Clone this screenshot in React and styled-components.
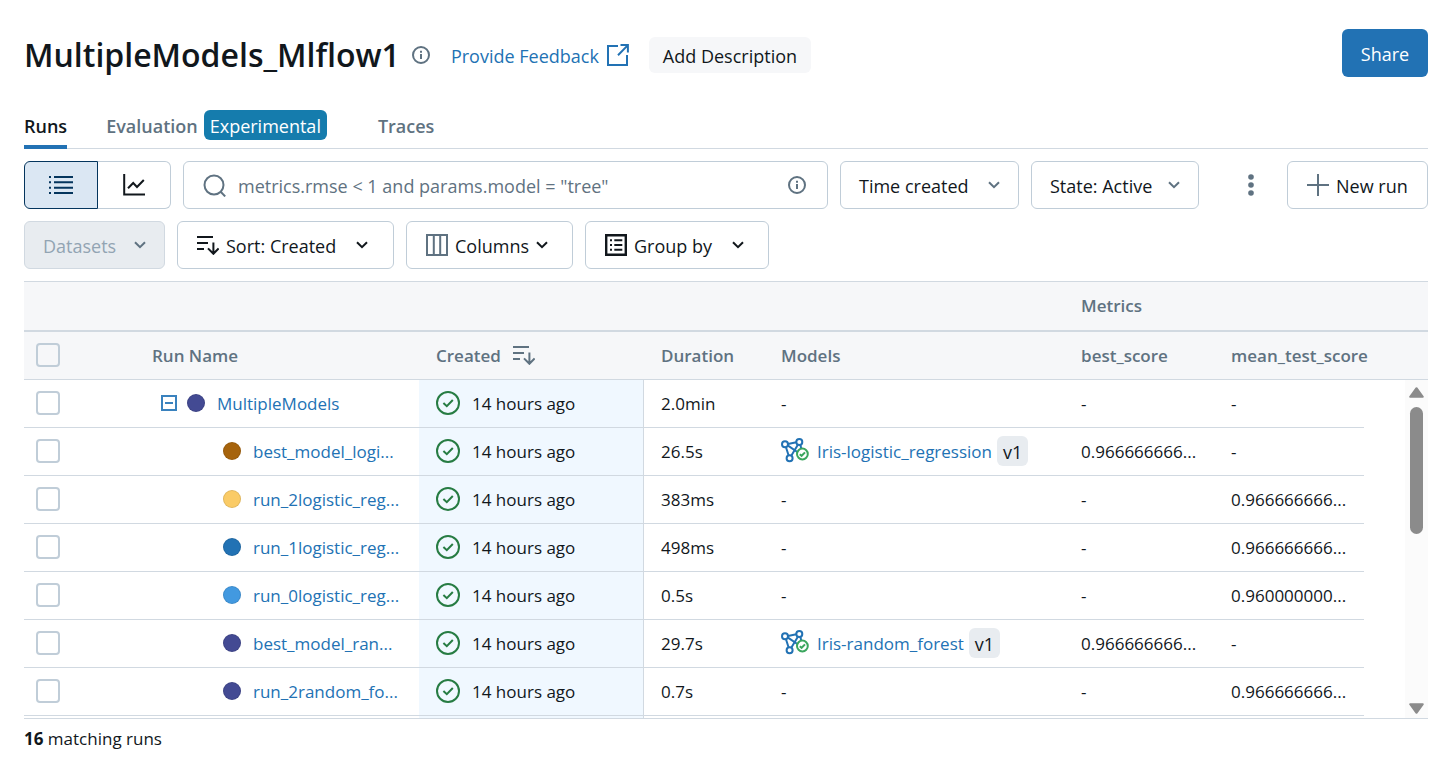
import React from "react";
import styled, { createGlobalStyle, css } from "styled-components";

const color = {
  text: "#11171c",
  muted: "#5f7281",
  link: "#2272b4",
  border: "#c0cdd8",
  line: "#d1d9e1",
  header: "#f6f7f9",
  disabled: "#e8ecf0",
};

const GlobalStyle = createGlobalStyle`
  * { box-sizing: border-box; }
  body {
    margin: 0;
    background: #fff;
    color: ${color.text};
    font-family: "Open Sans", "Noto Sans", sans-serif;
    font-size: 18px;
    line-height: 24px;
  }
  button, input { font: inherit; color: inherit; }
  svg { display: block; flex: none; }
`;

const Page = styled.main`
  padding: 29px 22px 20px 24px;
`;

const Header = styled.header`
  display: flex;
  align-items: center;
  height: 48px;
`;

const Title = styled.h1`
  margin: 0 12px 0 0;
  padding-top: 4px;
  font-size: 32px;
  line-height: 44px;
  font-weight: 600;
`;

const Link = styled.a`
  display: inline-flex;
  align-items: center;
  gap: 8px;
  color: ${color.link};
  text-decoration: none;
  white-space: nowrap;
`;

const FeedbackLink = styled(Link)`
  margin: 4px 20px 0 21px;
  height: 36px;
`;

const InfoSlot = styled.span`
  display: inline-flex;
  padding-top: 4px;
`;

const TonalButton = styled.button`
  height: 36px;
  margin-top: 4px;
  padding: 2px 14px 0;
  border: 0;
  border-radius: 6px;
  background: ${color.header};
`;

const ShareButton = styled.button`
  width: 86px;
  height: 48px;
  margin-left: auto;
  padding: 2px 0 0;
  border: 0;
  border-radius: 6px;
  background: ${color.link};
  color: #fff;
`;

const Tabs = styled.nav`
  display: flex;
  gap: 39px;
  height: 48px;
  margin-top: 24px;
  border-bottom: 1px solid ${color.line};
`;

const Tab = styled.a`
  display: flex;
  align-items: center;
  gap: 6px;
  height: 48px;
  padding-top: 4px;
  color: ${(p) => (p.$active ? color.text : color.muted)};
  border-bottom: 4px solid ${(p) => (p.$active ? color.link : "transparent")};
  font-weight: 600;
  text-decoration: none;
`;

const TabLabel = styled.span`
  padding-top: 2px;
`;

const Badge = styled.span`
  height: 30px;
  padding: 0 6px;
  margin-right: 12px;
  border-radius: 6px;
  background: #157cad;
  color: #fff;
  font-weight: 400;
  line-height: 32px;
`;

const Toolbar = styled.div`
  display: flex;
  gap: 12px;
  margin-top: 12px;
`;

const Segments = styled.div`
  display: flex;
`;

const segmentActive = css`
  width: 74px;
  border-color: #04355d;
  border-left-width: 1px;
  border-radius: 6px 0 0 6px;
  background: #dbe7f3;
  color: #04355d;
`;

const Segment = styled.button`
  display: flex;
  align-items: center;
  justify-content: center;
  width: 73px;
  height: 48px;
  padding: 0;
  border: 1px solid ${color.border};
  border-left-width: 0;
  border-radius: 0 6px 6px 0;
  background: #fff;
  ${(p) => p.$active && segmentActive}
`;

const SearchBox = styled.label`
  display: flex;
  flex: 1;
  align-items: center;
  gap: 12px;
  height: 48px;
  padding: 0 21px 0 19px;
  border: 1px solid ${color.border};
  border-radius: 6px;
  color: ${color.muted};
`;

const SearchInput = styled.input`
  flex: 1;
  min-width: 0;
  padding: 2px 0 0;
  border: 0;
  outline: 0;
  background: transparent;
  &::placeholder { color: ${color.muted}; opacity: 1; }
`;

const ToolButton = styled.button`
  display: flex;
  align-items: center;
  gap: ${(p) => p.$gap || 7}px;
  width: ${(p) => p.$width}px;
  height: 48px;
  padding: 0 ${(p) => (p.$icon ? 19 : 18)}px;
  border: 1px solid ${color.border};
  border-radius: 6px;
  background: #fff;
  white-space: nowrap;
  span { padding-top: 2px; }
  &:disabled {
    border-color: ${color.line};
    background: ${color.disabled};
    color: #92a4b3;
  }
`;

const Spaced = styled.i`
  margin-left: 13px;
`;

const MenuButton = styled.button`
  display: flex;
  align-items: center;
  justify-content: center;
  width: 48px;
  height: 48px;
  margin-left: 16px;
  padding: 0;
  border: 0;
  background: transparent;
`;

const GridFrame = styled.section`
  position: relative;
  margin-top: 12px;
  border-top: 1px solid ${color.line};
  border-bottom: 1px solid ${color.line};
`;

const Table = styled.table`
  width: 100%;
  table-layout: fixed;
  border-collapse: separate;
  border-spacing: 0;
`;

const Col = styled.col`
  width: ${(p) => (p.$width ? `${p.$width}px` : "auto")};
`;

const Th = styled.th`
  height: ${(p) => (p.$group ? 50 : 48)}px;
  padding: 0 0 0 ${(p) => (p.$pad ?? 17)}px;
  border-bottom: ${(p) => (p.$group ? 2 : 1)}px solid ${color.line};
  background: ${color.header};
  color: ${color.muted};
  font-size: 17px;
  font-weight: 600;
  text-align: left;
  white-space: nowrap;
`;

const Td = styled.td`
  height: 48px;
  padding: 0 0 0 ${(p) => (p.$pad ?? 17)}px;
  border-bottom: 1px solid ${color.line};
  font-size: 17px;
  white-space: nowrap;
  overflow: hidden;
  ${(p) => p.$sorted && css`
    border-right: 1px solid ${color.line};
    background: #f0f8ff;
  `}
  ${(p) => p.$bare && "border-bottom: 0;"}
  ${(p) => p.$peek && "height: 2px; border-bottom: 0;"}
`;

const Cell = styled.div`
  display: flex;
  align-items: center;
  gap: ${(p) => p.$gap || 0}px;
  padding: 0 0 2px ${(p) => p.$indent || 0}px;
`;

const CellText = styled.span`
  padding-top: 2px;
`;

const Checkbox = styled.input`
  display: block;
  appearance: none;
  width: 24px;
  height: 24px;
  margin: 0;
  border: 2px solid ${color.border};
  border-radius: 4px;
  background: transparent;
`;

const Expander = styled.button`
  margin-right: 10px;
  padding: 0;
  border: 0;
  background: transparent;
  color: #3a82be;
`;

const Dot = styled.span`
  flex: none;
  width: 18px;
  height: 18px;
  margin-right: 12px;
  border: 1px solid rgba(0, 0, 0, 0.1);
  border-radius: 50%;
  background: ${(p) => p.$color};
`;

const Version = styled.span`
  height: 30px;
  padding: 2px 6px 0;
  border-radius: 6px;
  background: ${color.disabled};
  font-size: 18px;
  line-height: 28px;
`;

const Scrollbar = styled.div`
  position: absolute;
  top: 98px;
  right: 0;
  bottom: 0;
  display: flex;
  flex-direction: column;
  align-items: center;
  justify-content: space-between;
  width: 23px;
  padding: 7px 0 4px;
  background: #fbfbfb;
`;

const ScrollTop = styled.div`
  display: flex;
  flex-direction: column;
  align-items: center;
  gap: 9px;
`;

const Thumb = styled.div`
  width: 13px;
  height: 127px;
  border-radius: 7px;
  background: #8b8b8b;
`;

const Footer = styled.footer`
  margin-top: 8px;
  font-size: 17px;
`;

const Stroke = ({ w, h, sw = 2, children, ...rest }) => (
  <svg width={w} height={h} viewBox={`0 0 ${w} ${h}`} fill="none" stroke="currentColor" strokeWidth={sw} aria-hidden="true" {...rest}>
    {children}
  </svg>
);

const InfoIcon = () => (
  <Stroke w={18} h={18} color={color.muted}>
    <circle cx="9" cy="9" r="8" />
    <path d="M9 8v5M9 4.7v2" />
  </Stroke>
);

const ExternalIcon = () => (
  <Stroke w={22} h={22}>
    <path d="M11 2H1V21H20V11M11 11.2 20.4 1.6M13.5 1.1H20.9V8.5" />
  </Stroke>
);

const ListIcon = () => (
  <Stroke w={24} h={20}>
    <path d="M0 2h2M0 7.3h2M0 12.7h2M0 18h2M5 2h19M5 7.3h19M5 12.7h19M5 18h19" />
  </Stroke>
);

const ChartIcon = () => (
  <Stroke w={22} h={22}>
    <path d="M1.2 0V20.5H22M5 14.2 10.2 9 14 13 20.8 6" />
  </Stroke>
);

const SearchIcon = () => (
  <Stroke w={23} h={23} color={color.muted}>
    <circle cx="11" cy="11" r="9.5" />
    <path d="M17.4 17.5 22.2 22.4" />
  </Stroke>
);

const Chevron = ({ muted }) => (
  <Stroke w={12} h={8} color={muted ? color.muted : color.text}>
    <path d="M1 1.2 6 6.2 11 1.2" />
  </Stroke>
);

const PlusIcon = () => (
  <Stroke w={22} h={22} color={color.muted}>
    <path d="M11 0v22M0 11h22" />
  </Stroke>
);

const DotsIcon = () => (
  <svg width="6" height="22" viewBox="0 0 6 22" fill={color.muted} aria-hidden="true">
    <circle cx="3" cy="3" r="2.8" />
    <circle cx="3" cy="11" r="2.8" />
    <circle cx="3" cy="19" r="2.8" />
  </svg>
);

const SortIcon = () => (
  <Stroke w={22} h={20}>
    <path d="M0 2h16M0 8h11M0 14h7M16.4 7.5V18.6M11 13.4 16.4 18.8 21.6 13.4" />
  </Stroke>
);

const ColumnsIcon = () => (
  <Stroke w={22} h={22} color={color.muted}>
    <path d="M1 1H21V21H1ZM7.8 1V21M14.2 1V21" />
  </Stroke>
);

const GroupIcon = () => (
  <Stroke w={22} h={22}>
    <path strokeWidth="2.4" d="M1.2 1.2H20.8V20.8H1.2Z" />
    <path d="M5 6.3h2M5 11h2M5 15.7h2M9.3 6.3h8M9.3 11h8M9.3 15.7h8" />
  </Stroke>
);

const MinusBox = () => (
  <Stroke w={16} h={16}>
    <path d="M1 1H15V15H1ZM4 8h8" />
  </Stroke>
);

const SuccessIcon = () => (
  <Stroke w={24} h={24} color="#277c43">
    <circle cx="12" cy="12" r="11" />
    <path d="M7.4 12 10.8 15.2 16.8 9" />
  </Stroke>
);

const ModelIcon = () => (
  <Stroke w={28} h={26} color={color.link}>
    <path d="M7 6 15.4 4.3M4.9 9 7.7 17.8M7 7.7 20 16.5M17.2 6.3 10.4 17.6M19.3 6.5 20.6 12" />
    <circle cx="4" cy="6.3" r="3" />
    <circle cx="18.3" cy="4" r="3" />
    <circle cx="8.6" cy="20.2" r="3" />
    <circle cx="21.4" cy="16" r="5.4" fill="#fff" stroke="#3ba65e" />
    <path d="M18.8 16.2 20.6 17.8 24 14.4" stroke="#3ba65e" />
  </Stroke>
);

const Arrow = ({ down }) => (
  <svg width="15" height="11" viewBox="0 0 15 11" fill="#8b8b8b" stroke="#8b8b8b" strokeWidth="2" strokeLinejoin="round" aria-hidden="true">
    <path d={down ? "M1.2 1.2H13.8L7.5 9.8Z" : "M1.2 9.8H13.8L7.5 1.2Z"} />
  </svg>
);

const runs = [
  { name: "MultipleModels", dot: "#434a93", parent: true, duration: "2.0min" },
  { name: "best_model_logi...", dot: "#a6630c", duration: "26.5s", model: "Iris-logistic_regression", best: "0.966666666..." },
  { name: "run_2logistic_reg...", dot: "#facb66", duration: "383ms", mean: "0.966666666..." },
  { name: "run_1logistic_reg...", dot: "#2272b4", duration: "498ms", mean: "0.966666666..." },
  { name: "run_0logistic_reg...", dot: "#4299e0", duration: "0.5s", mean: "0.960000000..." },
  { name: "best_model_ran...", dot: "#434a93", duration: "29.7s", model: "Iris-random_forest", best: "0.966666666..." },
  { name: "run_2random_fo...", dot: "#434a93", duration: "0.7s", mean: "0.966666666..." },
];

const RunRow = ({ run }) => (
  <tr>
    <Td $pad={12}>
      <Cell><Checkbox type="checkbox" aria-label={`Select ${run.name}`} /></Cell>
    </Td>
    <Td $pad={21}>
      <Cell $indent={run.parent ? 0 : 62}>
        {run.parent && <Expander aria-label="Collapse"><MinusBox /></Expander>}
        <Dot $color={run.dot} />
        <Link href="#run"><CellText>{run.name}</CellText></Link>
      </Cell>
    </Td>
    <Td $sorted><Cell $gap={12}><SuccessIcon /><CellText>14 hours ago</CellText></Cell></Td>
    <Td>{run.duration}</Td>
    <Td>
      {run.model ? (
        <Cell $gap={5}>
          <Link href="#model"><ModelIcon /><CellText>{run.model}</CellText></Link>
          <Version>v1</Version>
        </Cell>
      ) : "-"}
    </Td>
    <Td>{run.best || "-"}</Td>
    <Td>{run.mean || "-"}</Td>
    <Td $bare />
  </tr>
);

export default function App() {
  return (
    <>
      <GlobalStyle />
      <Page>
        <Header>
          <Title>MultipleModels_Mlflow1</Title>
          <InfoSlot><InfoIcon /></InfoSlot>
          <FeedbackLink href="#feedback"><CellText>Provide Feedback</CellText><ExternalIcon /></FeedbackLink>
          <TonalButton>Add Description</TonalButton>
          <ShareButton>Share</ShareButton>
        </Header>

        <Tabs>
          <Tab href="#runs" $active><TabLabel>Runs</TabLabel></Tab>
          <Tab href="#evaluation"><TabLabel>Evaluation</TabLabel><Badge>Experimental</Badge></Tab>
          <Tab href="#traces"><TabLabel>Traces</TabLabel></Tab>
        </Tabs>

        <Toolbar>
          <Segments>
            <Segment $active aria-label="Table view"><ListIcon /></Segment>
            <Segment aria-label="Chart view"><ChartIcon /></Segment>
          </Segments>
          <SearchBox>
            <SearchIcon />
            <SearchInput aria-label="Search runs" placeholder={'metrics.rmse < 1 and params.model = "tree"'} />
            <InfoIcon />
          </SearchBox>
          <ToolButton $width={179} $gap={19}><span>Time created</span><Chevron muted /></ToolButton>
          <ToolButton $width={168} $gap={16}><span>State: Active</span><Chevron muted /></ToolButton>
          <MenuButton aria-label="More actions"><DotsIcon /></MenuButton>
          <ToolButton $width={141} $icon><PlusIcon /><span>New run</span></ToolButton>
        </Toolbar>

        <Toolbar>
          <ToolButton $width={141} $gap={18} disabled><span>Datasets</span><Chevron muted /></ToolButton>
          <ToolButton $width={217} $icon><SortIcon /><span>Sort: Created</span><Spaced><Chevron /></Spaced></ToolButton>
          <ToolButton $width={167} $icon><ColumnsIcon /><span>Columns</span><Chevron /></ToolButton>
          <ToolButton $width={184} $icon><GroupIcon /><span>Group by</span><Spaced><Chevron /></Spaced></ToolButton>
        </Toolbar>

        <GridFrame>
          <Table>
            <colgroup>
              <Col $width={116} /><Col $width={279} /><Col $width={225} /><Col $width={120} />
              <Col $width={300} /><Col $width={150} /><Col $width={150} /><Col />
            </colgroup>
            <thead>
              <tr>
                <Th $group colSpan={5} />
                <Th $group colSpan={2}>Metrics</Th>
                <Th $group />
              </tr>
              <tr>
                <Th $pad={12}>
                  <Cell><Checkbox type="checkbox" aria-label="Select all runs" /></Cell>
                </Th>
                <Th $pad={12}>Run Name</Th>
                <Th><Cell $gap={12}><CellText>Created</CellText><SortIcon /></Cell></Th>
                <Th>Duration</Th>
                <Th>Models</Th>
                <Th>best_score</Th>
                <Th>mean_test_score</Th>
                <Th />
              </tr>
            </thead>
            <tbody>
              {runs.map((run) => <RunRow key={run.name} run={run} />)}
              <tr>
                <Td $peek colSpan={2} />
                <Td $peek $sorted />
                <Td $peek colSpan={5} />
              </tr>
            </tbody>
          </Table>
          <Scrollbar aria-hidden="true">
            <ScrollTop><Arrow /><Thumb /></ScrollTop>
            <Arrow down />
          </Scrollbar>
        </GridFrame>

        <Footer><b>16</b> matching runs</Footer>
      </Page>
    </>
  );
}
